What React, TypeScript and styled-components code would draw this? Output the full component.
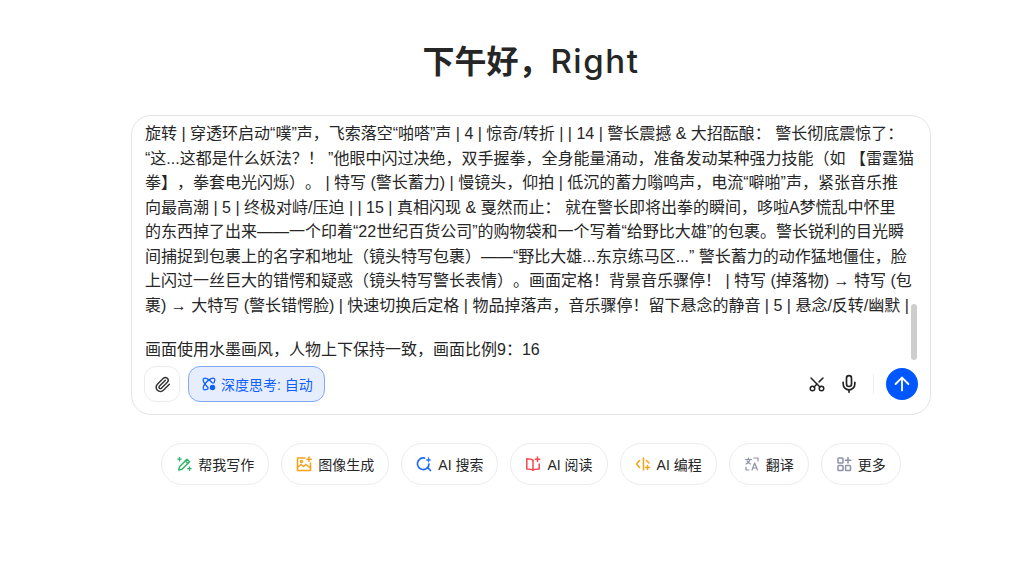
import React from "react";
import styled, { createGlobalStyle } from "styled-components";
import { ArrowUp, Mic, Paperclip, Scissors } from "lucide-react";

const GlobalStyle = createGlobalStyle`
  html, body {
    margin: 0;
    padding: 0;
    background: #fff;
    font-family: "Liberation Sans", "Noto Sans CJK SC", sans-serif;
    color: #222;
    text-spacing-trim: space-all;
  }
`;

const Page = styled.div`
  display: flex;
  flex-direction: column;
  align-items: center;
  height: 569px;
  padding-left: 33px;
  box-sizing: border-box;
  overflow: hidden;
`;

const Title = styled.h1`
  margin: 0;
  height: 115px;
  padding-top: 36px;
  box-sizing: border-box;
  font-family: "Noto Sans CJK SC", sans-serif;
  font-size: 32px;
  line-height: 46px;
  font-weight: 700;
  color: #262626;
  white-space: nowrap;
`;

const TitleName = styled.span`
  font-family: "Inter", sans-serif;
  font-weight: 500;
  font-size: 33px;
  letter-spacing: 1.6px;
`;

const Composer = styled.div`
  position: relative;
  width: 800px;
  height: 300px;
  box-sizing: border-box;
  border: 1px solid #e4e4e7;
  border-radius: 20px;
  display: flex;
  flex-direction: column;
  padding: 6px 12px 12px 12px;
`;

const PromptText = styled.div`
  flex: 1;
  overflow: hidden;
  padding-left: 1px;
  font-size: 16px;
  line-height: 24.5px;
  color: #262626;
`;

const PromptLine = styled.div<{ $blank?: boolean }>`
  white-space: nowrap;
  height: ${(p) => (p.$blank ? "20px" : "24.5px")};
`;

const ScrollThumb = styled.div`
  position: absolute;
  right: 13px;
  top: 188px;
  width: 6px;
  height: 56px;
  border-radius: 3px;
  background: #cdcdcd;
`;

const Toolbar = styled.div`
  display: flex;
  align-items: center;
  height: 36px;
  margin-top: 4px;
  gap: 8px;
`;

const AttachButton = styled.button`
  width: 36px;
  height: 36px;
  padding: 0;
  box-sizing: border-box;
  border: 1px solid #ececec;
  border-radius: 12px;
  background: #fff;
  color: #333;
  display: flex;
  align-items: center;
  justify-content: center;
`;

const ThinkButton = styled.button`
  height: 36px;
  width: 137px;
  padding: 0 0 0 12px;
  box-sizing: border-box;
  border: 1px solid #7fa8fb;
  border-radius: 12px;
  background: #e6eefe;
  color: #0f5fff;
  display: flex;
  align-items: center;
  gap: 4px;
  font-family: inherit;
  font-size: 14px;
  white-space: nowrap;
`;

const ToolbarRight = styled.div`
  margin-left: auto;
  display: flex;
  align-items: center;
`;

const IconButton = styled.button`
  width: 32px;
  height: 32px;
  padding: 0;
  border: 0;
  background: transparent;
  color: #222;
  display: flex;
  align-items: center;
  justify-content: center;
`;

const RotatedScissors = styled(Scissors)`
  transform: rotate(-90deg);
`;

const Divider = styled.div`
  width: 1px;
  height: 20px;
  background: #efefef;
  margin: 0 12px 0 8px;
`;

const SendButton = styled.button`
  width: 32px;
  height: 32px;
  padding: 0;
  border: 0;
  border-radius: 50%;
  background: #0057ff;
  color: #fff;
  display: flex;
  align-items: center;
  justify-content: center;
`;

const ChipRow = styled.div`
  display: flex;
  gap: 12px;
  margin-top: 28px;
`;

const Chip = styled.button`
  height: 42px;
  padding: 0 14px;
  box-sizing: border-box;
  border: 1px solid #ececec;
  border-radius: 21px;
  background: #fff;
  color: #262626;
  display: flex;
  align-items: center;
  gap: 6px;
  font-family: inherit;
  font-size: 14px;
  font-weight: 400;
  white-space: nowrap;
`;

const ChipIcon = styled.svg<{ $color: string }>`
  width: 16px;
  height: 16px;
  flex: none;
  fill: none;
  stroke: ${(p) => p.$color};
  stroke-width: 1.5;
  stroke-linecap: round;
  stroke-linejoin: round;
`;

const ThinkIcon = () => (
  <svg width="16" height="16" viewBox="0 0 16 16" fill="none" stroke="currentColor" strokeWidth="1.3">
    <ellipse cx="8" cy="8" rx="3.2" ry="7.6" transform="rotate(45 8 8)" />
    <ellipse cx="8" cy="8" rx="3.2" ry="7.6" transform="rotate(-45 8 8)" />
    <circle cx="11.5" cy="11.5" r="3.4" fill="currentColor" stroke="#e6eefe" />
  </svg>
);

const chips: { label: string; color: string; icon: React.ReactNode }[] = [
  {
    label: "帮我写作",
    color: "#35b46a",
    icon: (
      <>
        <path d="M2.800 14l.7-3.200L11 3.300l2.500 2.500L6 13.300z" />
        <path d="M9.300 5l2.500 2.500" />
        <path d="M3.500 1.500v3.400M1.800 3.200h3.400M13.500 11v3.400M11.800 12.700h3.400" strokeWidth="1.300" />
      </>
    ),
  },
  {
    label: "图像生成",
    color: "#f9a11b",
    icon: (
      <>
        <path d="M9 2H1.500v12.500h13V7" />
        <path d="M1.500 11.500l3.500-3 2.500 2 2.500-2 4.500 3.500" />
        <circle cx="5.500" cy="5.500" r="1" />
        <path d="M13 1v4.500M10.800 3.200h4.500" />
      </>
    ),
  },
  {
    label: "AI 搜索",
    color: "#1f6bff",
    icon: (
      <>
        <path d="M8.500 2.100A5.800 5.800 0 1 0 13 8" strokeWidth="1.700" />
        <path d="M11.500 11.500l3 3" strokeWidth="1.700" />
        <path d="M12.500 1.500l.6 1.900 1.900.6-1.900.6-.6 1.900-.6-1.900-1.900-.6 1.900-.6z" fill="#1f6bff" strokeWidth="0.500" />
      </>
    ),
  },
  {
    label: "AI 阅读",
    color: "#f5484d",
    icon: (
      <>
        <path d="M8 4.500C7 3.300 5 2.800 1.800 2.800V13c3.200 0 5.200.3 6.200 1.300 1-1 3-1.300 6.200-1.300V8" />
        <path d="M8 4.500v9.500" />
        <path d="M12.500 1v4.500M10.300 3.200h4.500" />
      </>
    ),
  },
  {
    label: "AI 编程",
    color: "#f9a11b",
    icon: (
      <>
        <path d="M4.500 4.500L1.500 8l3 3.500" />
        <path d="M8.500 2v12" />
        <path d="M11.500 4.500l2.500 2.500" />
        <path d="M12.500 9.500v4M10.500 11.500h4" />
      </>
    ),
  },
  {
    label: "翻译",
    color: "#8d92a8",
    icon: (
      <>
        <path d="M1.500 3.500h6M4.500 2v1.500M6 3.500c-.5 2-2 3.500-4 4.500M3 5c.7 1.300 2 2.300 3.500 3" strokeWidth="1.200" />
        <path d="M8 14l2.700-7 2.800 7M9 12h3.500" strokeWidth="1.200" />
        <path d="M10 2h4v3M2 11v3h3" strokeWidth="1.200" />
      </>
    ),
  },
  {
    label: "更多",
    color: "#8d92a8",
    icon: (
      <>
        <rect x="2" y="2" width="5" height="5" rx="0.800" />
        <rect x="2" y="9.500" width="5" height="5" rx="0.800" />
        <rect x="9.500" y="9.500" width="5" height="5" rx="0.800" />
        <path d="M12 1.500v5.500M9.300 4.200h5.500" />
      </>
    ),
  },
];

const promptLines = [
  "旋转 | 穿透环启动“噗”声，飞索落空“啪嗒”声 | 4 | 惊奇/转折 | | 14 | 警长震撼 & 大招酝酿： 警长彻底震惊了：",
  "“这...这都是什么妖法？！ ”他眼中闪过决绝，双手握拳，全身能量涌动，准备发动某种强力技能（如 【雷霆猫",
  "拳】，拳套电光闪烁）。 | 特写 (警长蓄力) | 慢镜头，仰拍 | 低沉的蓄力嗡鸣声，电流“噼啪”声，紧张音乐推",
  "向最高潮 | 5 | 终极对峙/压迫 | | 15 | 真相闪现 & 戛然而止： 就在警长即将出拳的瞬间，哆啦A梦慌乱中怀里",
  "的东西掉了出来——一个印着“22世纪百货公司”的购物袋和一个写着“给野比大雄”的包裹。警长锐利的目光瞬",
  "间捕捉到包裹上的名字和地址（镜头特写包裹）——“野比大雄...东京练马区...” 警长蓄力的动作猛地僵住，脸",
  "上闪过一丝巨大的错愕和疑惑（镜头特写警长表情）。画面定格！背景音乐骤停！ | 特写 (掉落物) → 特写 (包",
  "裹) → 大特写 (警长错愕脸) | 快速切换后定格 | 物品掉落声，音乐骤停！留下悬念的静音 | 5 | 悬念/反转/幽默 |",
  "",
  "画面使用水墨画风，人物上下保持一致，画面比例9：16",
];

const App: React.FC = () => {
  return (
    <Page>
      <GlobalStyle />
      <Title>
        下午好，<TitleName>Right</TitleName>
      </Title>

      <Composer>
        <PromptText>
          {promptLines.map((line, i) => (
            <PromptLine key={i} $blank={line === ""}>
              {line}
            </PromptLine>
          ))}
        </PromptText>
        <ScrollThumb />
        <Toolbar>
          <AttachButton>
            <Paperclip size={17} />
          </AttachButton>
          <ThinkButton>
            <ThinkIcon />
            深度思考: 自动
          </ThinkButton>
          <ToolbarRight>
            <IconButton>
              <RotatedScissors size={18} />
            </IconButton>
            <IconButton>
              <Mic size={20} />
            </IconButton>
            <Divider />
            <SendButton>
              <ArrowUp size={22} strokeWidth={2} />
            </SendButton>
          </ToolbarRight>
        </Toolbar>
      </Composer>

      <ChipRow>
        {chips.map((chip) => (
          <Chip key={chip.label}>
            <ChipIcon $color={chip.color} viewBox="0 0 16 16">
              {chip.icon}
            </ChipIcon>
            {chip.label}
          </Chip>
        ))}
      </ChipRow>
    </Page>
  );
};

export default App;
